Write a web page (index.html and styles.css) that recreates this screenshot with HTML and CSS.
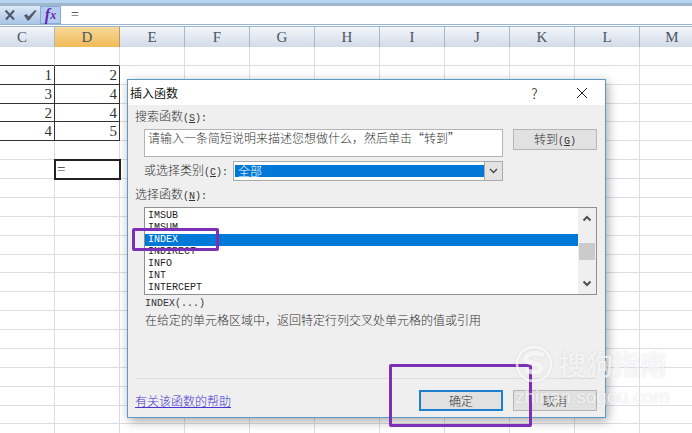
FILE: index.html
```
<!DOCTYPE html>
<html lang="zh-CN">
<head>
<meta charset="utf-8">
<title>插入函数</title>
<link rel="stylesheet" href="styles.css">
<script src="sheet.js" defer></script>
</head>
<body>
<div class="ribbon-edge"></div>
<div class="formula-bar">
  <div class="formula-tools">
    <button class="tool" aria-label="取消输入"><svg width="12" height="12" viewBox="0 0 12 12"><path d="M1.5 1.5L10 10.5M10 1.5L2 10.5" stroke="#525b6b" stroke-width="2.2" fill="none"/></svg></button>
    <button class="tool" aria-label="输入"><svg width="14" height="12" viewBox="0 0 14 12"><path d="M1 6.500l2.500-1.500 2 2.500L12 1l1.500 1L6 11.500H4.500z" fill="#525b6b"/></svg></button>
    <button class="tool fx" aria-label="插入函数"><i>f</i><i class="sub">x</i></button>
  </div>
  <input class="formula" aria-label="编辑栏" value="=">
</div>
<main class="sheet">
  <table class="grid">
    <thead><tr><th class="first">C</th><th class="current">D</th><th>E</th><th>F</th><th>G</th><th>H</th><th>I</th><th>J</th><th>K</th><th>L</th><th>M</th></tr></thead>
    <tbody id="rows"></tbody>
  </table>
</main>

<section class="dialog" role="dialog" aria-labelledby="dialog-title">
  <header class="titlebar">
    <h1 id="dialog-title">插入函数</h1>
    <button class="caption" aria-label="帮助">?</button>
    <button class="caption" aria-label="关闭"><svg width="12" height="12" viewBox="0 0 12 12"><path d="M1 1l10 10M11 1L1 11" stroke="#222" fill="none"/></svg></button>
  </header>
  <form class="body">
    <label for="search">搜索函数<span class="key">(<u>S</u>):</span></label>
    <div class="search-row">
      <div class="search-fields">
        <textarea id="search">请输入一条简短说明来描述您想做什么，然后单击“转到”</textarea>
        <div class="category">
          <label for="category">或选择类别<span class="key">(<u>C</u>):</span></label>
          <div class="combo">
            <select id="category"><option>全部</option></select>
            <span class="combo-arrow"><svg width="9" height="6" viewBox="0 0 9 6"><path d="M1 1l3.500 3.500L8 1" stroke="#444" stroke-width="1.300" fill="none"/></svg></span>
          </div>
        </div>
      </div>
      <button type="button" class="btn">转到<span class="key">(<u>G</u>)</span></button>
    </div>
    <label for="functions" class="list-label">选择函数<span class="key">(<u>N</u>):</span></label>
    <div class="listbox">
      <select id="functions" size="7">
        <option>IMSUB</option><option>IMSUM</option><option selected>INDEX</option><option>INDIRECT</option><option>INFO</option><option>INT</option><option>INTERCEPT</option>
      </select>
      <div class="scrollbar">
        <svg width="10" height="7" viewBox="0 0 10 7"><path d="M1.500 5.500L5 2l3.500 3.500" stroke="#505050" stroke-width="2" fill="none"/></svg>
        <span class="thumb"></span>
        <svg width="10" height="7" viewBox="0 0 10 7"><path d="M1.500 1.500L5 5l3.500-3.500" stroke="#505050" stroke-width="2" fill="none"/></svg>
      </div>
    </div>
    <div class="description">
      <p class="key">INDEX(...)</p>
      <p>在给定的单元格区域中，返回特定行列交叉处单元格的值或引用</p>
    </div>
    <footer class="actions">
      <a href="#help">有关该函数的帮助</a>
      <button type="button" class="btn primary">确定</button>
      <button type="button" class="btn">取消</button>
    </footer>
  </form>
</section>

<div class="mark mark-item"></div>
<div class="mark mark-ok"></div>
<div class="watermark">
  <div class="brand">
    <svg width="38" height="38" viewBox="0 0 38 38"><circle cx="19" cy="19" r="17" fill="none" stroke="currentColor" stroke-width="2.500"/><path d="M29 10C22 7 10 8 11 14c1 6 15 3 15 9 0 5-9 5-16 2" fill="none" stroke="currentColor" stroke-width="5"/></svg>
    <span>搜狗指南</span>
  </div>
  <div class="site">zhinan.sogou.com</div>
</div>
</body>
</html>
```
FILE: styles.css
```
* { box-sizing: border-box; }
html, body { height: 100%; }
body {
  margin: 0;
  display: flex;
  flex-direction: column;
  position: relative;
  overflow: hidden;
  background: #fff;
  color: #333;
  font: 300 12px/16px "Liberation Serif", "Noto Sans CJK SC", serif;
}
button, input, select, textarea { font: inherit; color: inherit; margin: 0; }
h1, p { margin: 0; }

.ribbon-edge {
  flex: none;
  height: 6px;
  background: linear-gradient(#b5d4f1 0 3px, #a0b6cd 3px);
}
.formula-bar {
  flex: none;
  display: flex;
  height: 21px;
  border-bottom: 3px double #9bb5cc;
}
.formula-tools {
  display: flex;
  width: 61px;
  background: linear-gradient(#dbe7f5, #a9c5e6);
}
.tool {
  display: flex;
  align-items: center;
  justify-content: center;
  width: 20px;
  padding: 0;
  border: 0;
  background: none;
}
.fx {
  width: 21px;
  border: 1px solid #85aadb;
  background: #b4cdee;
  color: #6a1fb8;
  font-weight: 700;
  font-size: 16px;
}
.sub { font-size: 12px; }
.formula {
  flex: 1;
  min-width: 0;
  padding: 0 10px;
  border: 0;
  outline: 0;
  font-size: 14px;
}

.sheet { flex: 1; min-height: 0; overflow: hidden; }
.grid {
  width: 705px;
  table-layout: fixed;
  border-collapse: separate;
  border-spacing: 0;
}
.grid th {
  height: 20px;
  padding: 0;
  border-right: 1px solid #a6b7c9;
  background: linear-gradient(#f3f6fa, #d2dbe8);
  font-size: 15px;
  font-weight: 400;
  line-height: 18px;
  color: #4b5563;
}
.grid .first { width: 55px; padding-right: 10px; }
.grid .current {
  border-color: #b99a5d;
  background: linear-gradient(#f9d99a, #f0bb58);
}
.grid td {
  height: 19px;
  padding: 0 2px;
  border: solid #dcdde2;
  border-width: 0 1px 1px 0;
  text-align: right;
  font-size: 15px;
  line-height: 16px;
}
.grid tr:nth-child(8n + 4) td { height: 18px; }
.grid td.filled, .grid td.above { border-bottom-color: #333; }
.grid td.filled { border-right-color: #333; }
.grid td.active {
  outline: 2px solid #222;
  outline-offset: -1px;
  text-align: left;
}

.dialog {
  position: absolute;
  left: 127px;
  top: 79px;
  width: 479px;
  border: 1px solid #5a9ac8;
  background: #efefef;
  box-shadow: 2px 3px 10px rgba(0, 0, 0, .35);
  font-family: "Noto Sans CJK SC", sans-serif;
}
.titlebar {
  display: flex;
  align-items: center;
  height: 25px;
  padding-left: 2px;
  background: #fff;
  color: #111;
}
.titlebar h1 { flex: 1; font-size: 12px; font-weight: 400; }
.caption {
  width: 47px;
  height: 25px;
  padding: 0;
  border: 0;
  background: none;
  font-size: 14px;
}
.caption svg { display: block; margin: auto; }
.body { padding: 3px 8px 6px 7px; }
.body label { display: block; }
.key { font-family: "Liberation Mono", monospace; font-size: 10px; font-weight: 400; }
.search-row {
  display: flex;
  align-items: flex-start;
  gap: 10px;
  margin-top: 2px;
  padding-left: 9px;
}
.search-fields { flex: 1; min-width: 0; }
textarea {
  display: block;
  width: 100%;
  height: 28px;
  padding: 0 3px;
  border: 1px solid #b4b4b4;
  outline: 0;
  resize: none;
  overflow: hidden;
  background: #fff;
}
.category { display: flex; align-items: center; margin-top: 4px; }
.category label { flex: 1; white-space: nowrap; }
.combo {
  display: flex;
  width: 270px;
  height: 20px;
  border: 1px solid #aaa;
  background: #fff;
}
.combo select {
  flex: 1;
  appearance: none;
  margin: 3px 0 3px 1px;
  padding: 0 3px;
  border: 0;
  border-radius: 0;
  outline: 0;
  background: #0078d7;
  color: #fff;
  line-height: 12px;
}
.combo-arrow {
  display: flex;
  align-items: center;
  justify-content: center;
  width: 18px;
  border-left: 1px solid #aaa;
  background: #e3e3e3;
}
.btn {
  width: 84px;
  height: 21px;
  padding: 0;
  border: 1px solid #b5b5b5;
  background: #e1e1e1;
  line-height: 18px;
}
.primary { border: 2px solid #1c7fd0; line-height: 16px; }
.body .list-label { margin-top: 5px; }
.listbox {
  display: flex;
  height: 88px;
  margin: 2px 0 0 9px;
  border: 1px solid #8f8f8f;
  background: #fff;
}
.listbox select {
  flex: 1;
  height: 86px;
  padding: 2px 0 0;
  border: 0;
  border-radius: 0;
  outline: 0;
  overflow: hidden;
  background: #fff;
  font: 400 10px/12px "Liberation Mono", monospace;
}
.listbox option {
  height: 12px;
  min-height: 12px;
  padding: 0 3px;
  color: #222;
}
.listbox option:checked {
  background: linear-gradient(#0078d7, #0078d7);
  color: #fff;
}
.scrollbar {
  display: flex;
  flex-direction: column;
  align-items: center;
  justify-content: space-between;
  width: 18px;
  padding: 7px 0;
  background: #efefef;
}
.thumb { width: 16px; height: 17px; background: #cbcbcb; }
.description { padding: 1px 0 0 10px; }
.description p { line-height: 16px; }
.actions {
  display: flex;
  align-items: center;
  gap: 10px;
  margin-top: 50px;
  padding-top: 11px;
  border-top: 1px solid #dedede;
}
.actions a { margin-right: auto; color: #4436cf; }

.mark { position: absolute; border: 3px solid #7d2fb5; border-radius: 2px; }
.mark-item { left: 132px; top: 228px; width: 87px; height: 23px; }
.mark-ok { left: 389px; top: 364px; width: 143px; height: 63px; }
.watermark {
  position: absolute;
  left: 515px;
  top: 345px;
  color: rgba(255, 255, 255, .7);
  font-family: "Noto Sans CJK SC", sans-serif;
  font-weight: 500;
  text-shadow: 0 0 2px rgba(130, 130, 130, .25);
  pointer-events: none;
}
.brand { display: flex; align-items: center; gap: 6px; font-size: 27px; line-height: 38px; }
.brand svg { filter: drop-shadow(0 0 1px rgba(130, 130, 130, .25)); }
.site { font: 400 19px/28px "Liberation Sans", sans-serif; }
```
FILE: sheet.js
```
const values = { 2: [1, 2], 3: [3, 4], 4: [2, 4], 5: [4, 5] };
const body = document.getElementById("rows");
for (let row = 1; row <= 21; row++) {
  const tr = body.insertRow();
  for (let col = 0; col < 11; col++) {
    const td = tr.insertCell();
    if (col < 2 && values[row]) {
      td.textContent = values[row][col];
      td.className = "filled";
    } else if (col < 2 && row === 1) {
      td.className = "above";
    } else if (col === 1 && row === 7) {
      td.textContent = "=";
      td.className = "active";
    }
  }
}
```
